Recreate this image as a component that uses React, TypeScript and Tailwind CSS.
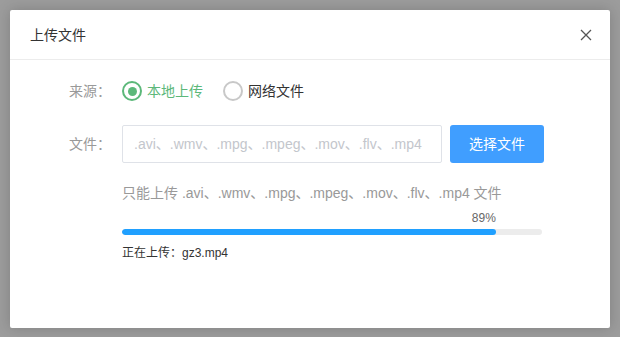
import React, { useState } from 'react';

const EXTS = '.avi、.wmv、.mpg、.mpeg、.mov、.flv、.mp4';

export default function App() {
  const [source, setSource] = useState<'local' | 'web'>('local');
  const progress = 89;

  return (
    <div
      className="w-[620px] h-[337px] bg-[#9c9c9c] pt-[10px] px-[10px]"
      style={{ fontFamily: '"Liberation Sans", "Noto Sans CJK SC", sans-serif' }}
    >
      <div className="h-[318px] bg-white rounded-[2px] shadow-[0_0_14px_rgba(0,0,0,0.18)] flex flex-col">
        {/* Header */}
        <div className="h-[50px] border-b border-[#ececec] flex items-center justify-between pl-[20px] pr-[17px]">
          <span className="text-[14px] leading-[20px] text-[#333]">上传文件</span>
          <button className="w-[14px] h-[14px] flex items-center justify-center">
            <svg width="12" height="12" viewBox="0 0 12 12">
              <path d="M1 1 L11 11 M11 1 L1 11" stroke="#555" strokeWidth="1.3" fill="none" />
            </svg>
          </button>
        </div>

        {/* Body */}
        <div className="pt-[11px]">
          {/* Source row */}
          <div className="flex items-center h-[40px]">
            <div className="w-[112px] pr-[11px] text-right text-[14px] text-[#999]">来源：</div>
            <div className="flex items-center gap-[20px]">
              <label className="flex items-center gap-[5px] cursor-pointer" onClick={() => setSource('local')}>
                <span
                  className={`w-[20px] h-[20px] rounded-full border-2 flex items-center justify-center ${
                    source === 'local' ? 'border-[#5cb87a]' : 'border-[#c8c8c8]'
                  }`}
                >
                  {source === 'local' && <span className="w-[9px] h-[9px] rounded-full bg-[#5cb87a]" />}
                </span>
                <span className={`text-[14px] ${source === 'local' ? 'text-[#5cb87a]' : 'text-[#333]'}`}>本地上传</span>
              </label>
              <label className="flex items-center gap-[5px] cursor-pointer" onClick={() => setSource('web')}>
                <span
                  className={`w-[20px] h-[20px] rounded-full border-2 flex items-center justify-center ${
                    source === 'web' ? 'border-[#5cb87a]' : 'border-[#c8c8c8]'
                  }`}
                >
                  {source === 'web' && <span className="w-[9px] h-[9px] rounded-full bg-[#5cb87a]" />}
                </span>
                <span className={`text-[14px] ${source === 'web' ? 'text-[#5cb87a]' : 'text-[#333]'}`}>网络文件</span>
              </label>
            </div>
          </div>

          {/* File row */}
          <div className="flex items-center mt-[14px]">
            <div className="w-[112px] pr-[11px] text-right text-[14px] text-[#999]">文件：</div>
            <input
              type="text"
              placeholder={EXTS}
              className="w-[320px] h-[38px] border border-[#dfe2e8] rounded-[2px] px-[11px] text-[14px] text-[#333] placeholder:text-[#c3c6cc] outline-none"
            />
            <button className="ml-[8px] w-[94px] h-[38px] bg-[#409eff] rounded-[3px] text-white text-[14px]">
              选择文件
            </button>
          </div>

          <div className="pl-[112px]">
            <div className="mt-[20px] text-[14px] leading-[20px] text-[#999]">只能上传 {EXTS} 文件</div>

            {/* Progress */}
            <div className="w-[420px] mt-[7px]">
              <div className="text-right text-[12px] leading-[16px] text-[#666]" style={{ width: `${progress}%` }}>
                {progress}%
              </div>
              <div className="mt-[3px] h-[6px] rounded-full bg-[#ececec] overflow-hidden">
                <div className="h-full rounded-full bg-[#20a0ff]" style={{ width: `${progress}%` }} />
              </div>
            </div>
            <div className="mt-[10px] text-[12px] leading-[16px] text-[#333]">正在上传：gz3.mp4</div>
          </div>
        </div>
      </div>
    </div>
  );
}
